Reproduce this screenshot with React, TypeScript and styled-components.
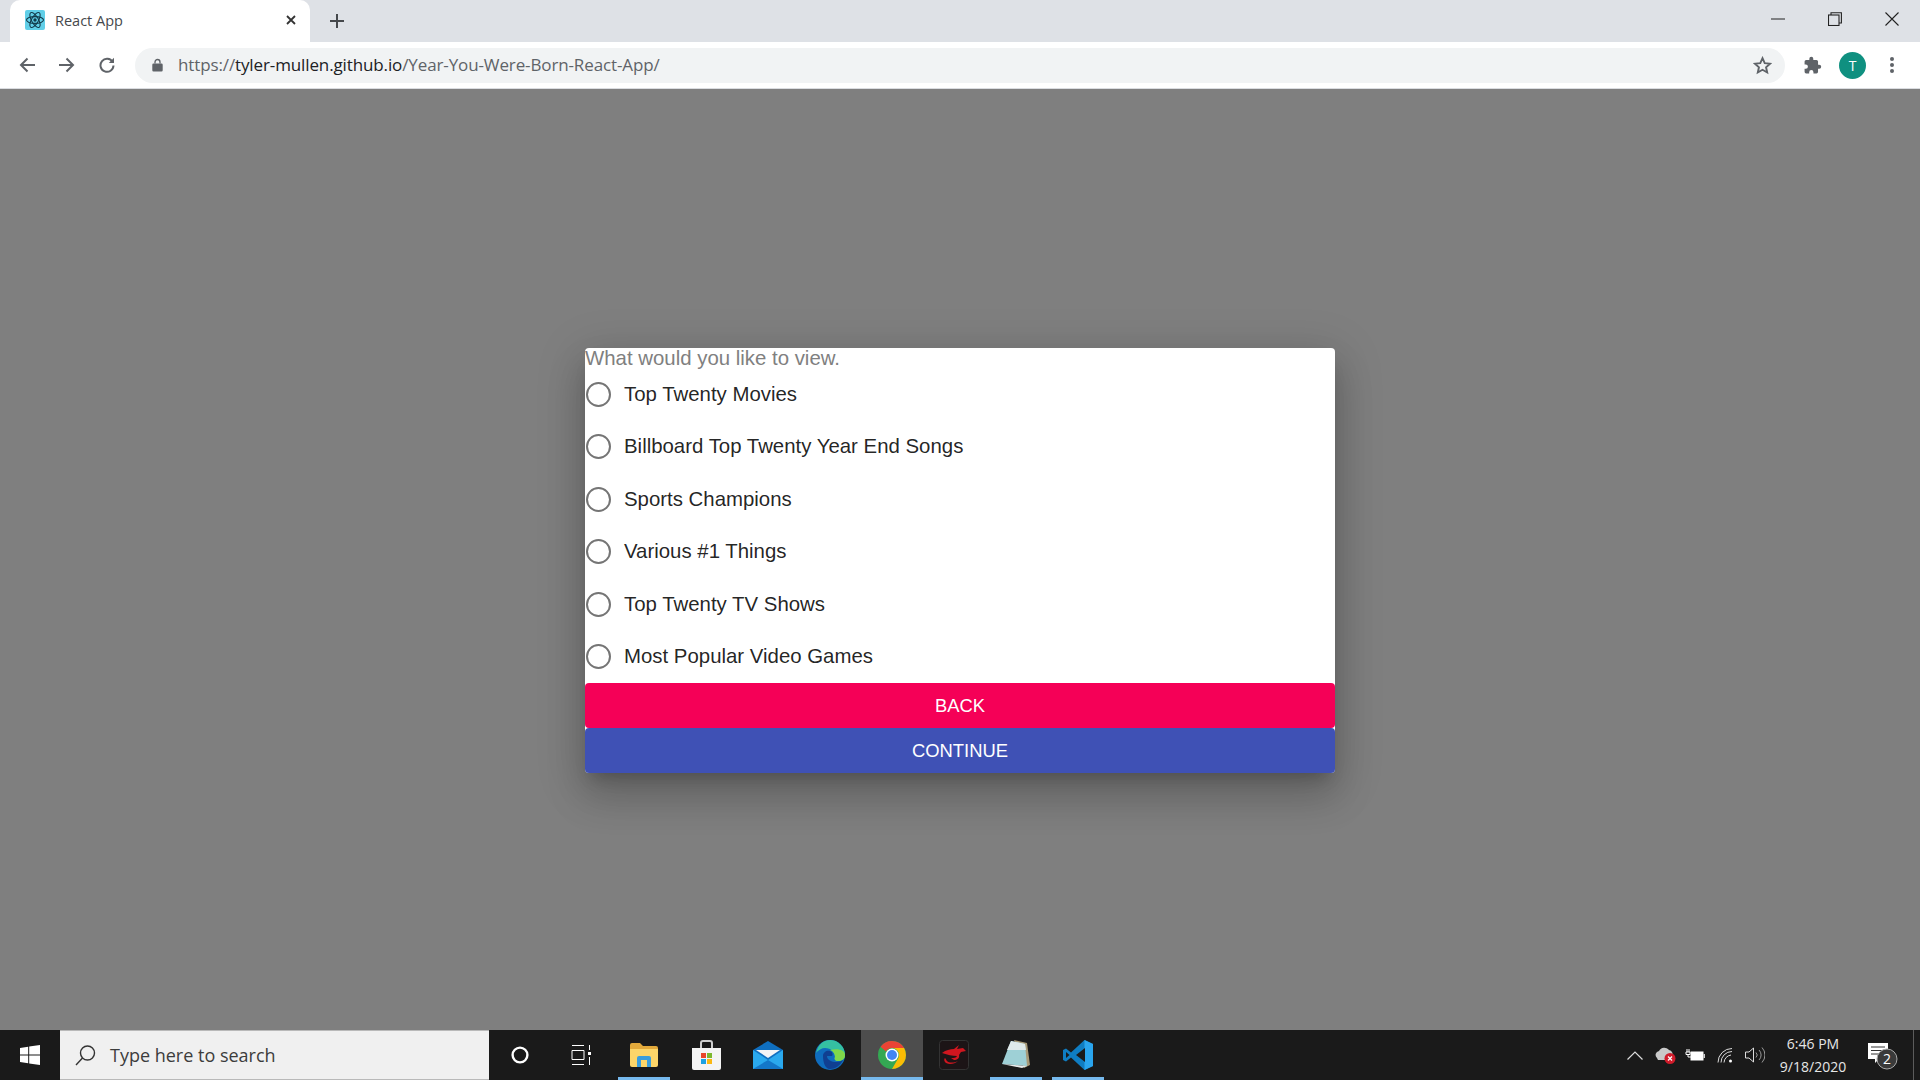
import styled, { createGlobalStyle } from "styled-components";

const GlobalStyle = createGlobalStyle`
  html, body {
    margin: 0;
    height: 100%;
    overflow: hidden;
  }
  #root {
    height: 100%;
  }
`;

const Screen = styled.div`
  height: 1080px;
  display: flex;
  flex-direction: column;
  font-family: "Open Sans", "Liberation Sans", sans-serif;
`;

const TabStrip = styled.div`
  height: 42px;
  background: #dee1e6;
  display: flex;
  padding-left: 10px;
`;
const Tab = styled.div`
  width: 300px;
  background: #fff;
  border-radius: 10px 10px 0 0;
  display: flex;
  align-items: center;
  padding: 0 13px 2px 15px;
  box-sizing: border-box;
`;
const TabTitle = styled.span`
  margin-left: 10px;
  font-size: 14.5px;
  color: #45484c;
  flex: 1;
`;
const NewTab = styled.div`
  width: 54px;
  display: flex;
  align-items: center;
  justify-content: center;
`;
const WindowControls = styled.div`
  margin-left: auto;
  display: flex;
  align-items: center;
  height: 38px;
`;
const WindowButton = styled.div`
  width: 57px;
  display: flex;
  justify-content: center;
`;

const Toolbar = styled.div`
  height: 46px;
  background: #fff;
  border-bottom: 1px solid #dadce0;
  display: flex;
  align-items: center;
`;
const NavButton = styled.div`
  width: 40px;
  display: flex;
  justify-content: center;
  &:first-child {
    margin-left: 7px;
  }
`;
const Omnibox = styled.div`
  margin-left: 8px;
  width: 1650px;
  height: 35px;
  border-radius: 18px;
  background: #f1f3f4;
  display: flex;
  align-items: center;
  padding: 0 13px 0 17px;
  box-sizing: border-box;
`;
const Url = styled.span`
  margin: 0 0 2px 15px;
  font-size: 17px;
  letter-spacing: -0.12px;
  color: #5f6368;
  flex: 1;
  b {
    font-weight: 400;
    color: #202124;
  }
`;
const ToolbarIcons = styled.div`
  display: flex;
  align-items: center;
  margin-left: 18px;
`;
const Avatar = styled.div`
  width: 27px;
  height: 27px;
  border-radius: 50%;
  background: #0f9080;
  color: #fff;
  font-size: 14px;
  display: flex;
  align-items: center;
  justify-content: center;
  margin: 0 23px 0 17px;
`;

const Stage = styled.main`
  flex: 1;
  padding-top: 2px;
  background: #7f7f7f;
  display: flex;
  align-items: center;
  justify-content: center;
`;
const Dialog = styled.div`
  width: 750px;
  height: 425px;
  background: #fff;
  border-radius: 4px;
  display: flex;
  flex-direction: column;
  font-family: "Liberation Sans", Arial, sans-serif;
  box-shadow: 0 11px 15px -7px rgba(0, 0, 0, 0.2), 0 24px 38px 3px rgba(0, 0, 0, 0.14),
    0 9px 46px 8px rgba(0, 0, 0, 0.12);
`;
const Legend = styled.div`
  height: 20px;
  font-size: 20.4px;
  line-height: 20px;
  color: #808080;
`;
const Options = styled.div`
  flex: 1;
  display: flex;
  flex-direction: column;
`;
const Option = styled.label`
  height: 52.5px;
  display: flex;
  align-items: center;
  font-size: 20.4px;
  color: rgba(0, 0, 0, 0.87);
`;
const Radio = styled.span`
  width: 21px;
  height: 21px;
  margin: 0 13px 0 1px;
  border: 2.5px solid #757575;
  border-radius: 50%;
  flex-shrink: 0;
`;
const ActionButton = styled.button<{ $bg: string }>`
  height: 45px;
  width: 100%;
  border: 0;
  padding: 0;
  border-radius: 4px;
  background: ${(p) => p.$bg};
  color: #fff;
  font-family: inherit;
  font-size: 18.4px;
  text-transform: uppercase;
`;

const Taskbar = styled.footer`
  height: 50px;
  background: #1a1a1a;
  display: flex;
  align-items: stretch;
`;
const StartButton = styled.div`
  width: 60px;
  display: flex;
  align-items: center;
  justify-content: center;
`;
const SearchBox = styled.div`
  width: 429px;
  background: #f0f0f0;
  border-top: 1px solid #b9b9b9;
  border-bottom: 1px solid #b9b9b9;
  box-sizing: border-box;
  display: flex;
  align-items: center;
  padding-left: 15px;
  font-size: 18px;
  color: #3c3c3c;
`;
const SearchLabel = styled.span`
  margin-left: 14px;
`;
const TaskItem = styled.div<{ $open?: boolean; $active?: boolean }>`
  width: 62px;
  position: relative;
  display: flex;
  align-items: center;
  justify-content: center;
  background: ${(p) => (p.$active ? "#4d4d4d" : "transparent")};
  &::after {
    content: "";
    display: ${(p) => (p.$open ? "block" : "none")};
    position: absolute;
    bottom: 0;
    left: ${(p) => (p.$active ? 0 : 5)}px;
    right: ${(p) => (p.$active ? 0 : 5)}px;
    height: 3px;
    background: #76b9ed;
  }
`;
const Tray = styled.div`
  margin-left: auto;
  display: flex;
  align-items: center;
`;
const TrayIcon = styled.div`
  width: 30px;
  display: flex;
  justify-content: center;
`;
const Clock = styled.div`
  width: 82px;
  margin-left: 2px;
  text-align: center;
  color: #e6e6e6;
  font-size: 14px;
  line-height: 23px;
`;
const Notify = styled.div`
  width: 50px;
  display: flex;
  justify-content: center;
  margin: 0 5px 0 4px;
`;
const ShowDesktop = styled.div`
  width: 6px;
  align-self: stretch;
  border-left: 1px solid #5c5c5c;
`;

const options = [
  "Top Twenty Movies",
  "Billboard Top Twenty Year End Songs",
  "Sports Champions",
  "Various #1 Things",
  "Top Twenty TV Shows",
  "Most Popular Video Games",
];

function App() {
  return (
    <Screen>
      <GlobalStyle />
      <TabStrip>
        <Tab>
          <svg width="20" height="20" viewBox="0 0 20 20">
            <rect width="20" height="20" rx="2" fill="#61cfe8" />
            <g fill="none" stroke="#123a4a" strokeWidth="1.1">
              <ellipse cx="10" cy="10" rx="8.5" ry="3.4" />
              <ellipse cx="10" cy="10" rx="8.5" ry="3.4" transform="rotate(60 10 10)" />
              <ellipse cx="10" cy="10" rx="8.5" ry="3.4" transform="rotate(120 10 10)" />
            </g>
            <circle cx="10" cy="10" r="1.7" fill="#123a4a" />
          </svg>
          <TabTitle>React App</TabTitle>
          <svg width="12" height="12" viewBox="0 0 12 12" stroke="#333" strokeWidth="1.8">
            <path d="M2 2l8 8M10 2l-8 8" />
          </svg>
        </Tab>
        <NewTab>
          <svg width="16" height="16" viewBox="0 0 16 16" stroke="#45484c" strokeWidth="2">
            <path d="M8 1v14M1 8h14" />
          </svg>
        </NewTab>
        <WindowControls>
          <WindowButton>
            <svg width="14" height="2" viewBox="0 0 14 2" stroke="#222">
              <path d="M0 1h14" />
            </svg>
          </WindowButton>
          <WindowButton>
            <svg width="14" height="14" viewBox="0 0 14 14" fill="none" stroke="#222" strokeWidth="1.1">
              <rect x="0.5" y="3" width="10.5" height="10.5" />
              <path d="M3 3V0.7h10.4V11H11" />
            </svg>
          </WindowButton>
          <WindowButton>
            <svg width="14" height="14" viewBox="0 0 14 14" stroke="#222" strokeWidth="1.1">
              <path d="M0.5 0.5l13 13M13.5 0.5l-13 13" />
            </svg>
          </WindowButton>
        </WindowControls>
      </TabStrip>

      <Toolbar>
        <NavButton>
          <svg width="16" height="16" viewBox="0 0 16 16" fill="none" stroke="#5f6368" strokeWidth="2">
            <path d="M16 8H2M8.5 1.5L2 8l6.5 6.5" />
          </svg>
        </NavButton>
        <NavButton>
          <svg width="16" height="16" viewBox="0 0 16 16" fill="none" stroke="#5f6368" strokeWidth="2">
            <path d="M0 8h14M7.5 1.5L14 8l-6.5 6.5" />
          </svg>
        </NavButton>
        <NavButton>
          <svg width="16" height="16" viewBox="0 0 16 16" fill="none" stroke="#5f6368" strokeWidth="2">
            <path d="M13.6 5A6.5 6.5 0 1 0 14.5 8.5" />
            <path d="M15 0.8V6H9.8z" fill="#5f6368" stroke="none" />
          </svg>
        </NavButton>
        <Omnibox>
          <svg width="11" height="14" viewBox="0 0 11 14" fill="#5f6368">
            <path d="M1.500 5.500h8a1.200 1.200 0 0 1 1.200 1.200v5.600a1.200 1.200 0 0 1-1.200 1.200h-8a1.200 1.200 0 0 1-1.200-1.200V6.700a1.200 1.200 0 0 1 1.200-1.200z" />
            <path d="M3 5.500V4a2.500 2.500 0 0 1 5 0v1.500" fill="none" stroke="#5f6368" strokeWidth="1.300" />
          </svg>
          <Url>
            https://<b>tyler-mullen.github.io</b>/Year-You-Were-Born-React-App/
          </Url>
          <svg width="19" height="19" viewBox="0 0 24 24" fill="none" stroke="#5f6368" strokeWidth="2.400">
            <path d="M12 2.800l2.800 6.200 6.700 0.700-5 4.500 1.400 6.600-5.900-3.400-5.900 3.400 1.400-6.600-5-4.500 6.700-0.700z" />
          </svg>
        </Omnibox>
        <ToolbarIcons>
          <svg width="19" height="19" viewBox="0 0 24 24" fill="#5f6368">
            <path d="M20.500 11H19V7a2 2 0 0 0-2-2h-4V3.500a2.500 2.500 0 0 0-5 0V5H4a2 2 0 0 0-2 2v3.800h1.500a2.700 2.700 0 0 1 0 5.400H2V20a2 2 0 0 0 2 2h3.800v-1.500a2.700 2.700 0 0 1 5.400 0V22H17a2 2 0 0 0 2-2v-4h1.500a2.500 2.500 0 0 0 0-5z" />
          </svg>
          <Avatar>T</Avatar>
          <svg width="6" height="18" viewBox="0 0 6 18" fill="#5f6368">
            <circle cx="3" cy="3" r="2" />
            <circle cx="3" cy="9" r="2" />
            <circle cx="3" cy="15" r="2" />
          </svg>
        </ToolbarIcons>
      </Toolbar>

      <Stage>
        <Dialog>
          <Legend>What would you like to view.</Legend>
          <Options>
            {options.map((o) => (
              <Option key={o}>
                <Radio />
                {o}
              </Option>
            ))}
          </Options>
          <ActionButton $bg="#f50057">Back</ActionButton>
          <ActionButton $bg="#3f51b5">Continue</ActionButton>
        </Dialog>
      </Stage>

      <Taskbar>
        <StartButton>
          <svg width="20" height="20" viewBox="0 0 20 20" fill="#fff">
            <path d="M0 2.900l8.200-1.200v7.800H0zM9.200 1.500L20 0v9.500H9.200zM0 10.500h8.200v7.800L0 17.100zM9.200 10.500H20V20L9.200 18.500z" />
          </svg>
        </StartButton>
        <SearchBox>
          <svg width="21" height="21" viewBox="0 0 21 21" fill="none" stroke="#333" strokeWidth="1.400">
            <circle cx="12.500" cy="8" r="7" />
            <path d="M7.500 13L1 20" />
          </svg>
          <SearchLabel>Type here to search</SearchLabel>
        </SearchBox>
        <TaskItem>
          <svg width="18" height="18" viewBox="0 0 18 18" fill="none" stroke="#fff" strokeWidth="2.400">
            <circle cx="9" cy="9" r="7.400" />
          </svg>
        </TaskItem>
        <TaskItem>
          <svg width="23" height="20" viewBox="0 0 23 20" fill="none" stroke="#fff" strokeWidth="1">
            <path d="M1 0.500h12M1 19.500h12M1 5.500h12v9H1zM18.500 0v5M18.500 12v8" />
            <rect x="17" y="7" width="3" height="3" fill="#fff" stroke="none" />
          </svg>
        </TaskItem>
        <TaskItem $open>
          <svg width="28" height="24" viewBox="0 0 28 24">
            <path d="M0 2a2 2 0 0 1 2-2h8l3 3h13a2 2 0 0 1 2 2v5H0z" fill="#e2a93b" />
            <path d="M0 6h28v16a2 2 0 0 1-2 2H2a2 2 0 0 1-2-2z" fill="#fcd569" />
            <path d="M7 24v-9a2 2 0 0 1 2-2h10a2 2 0 0 1 2 2v9h-4v-7h-6v7z" fill="#3a9ddc" />
          </svg>
        </TaskItem>
        <TaskItem>
          <svg width="29" height="30" viewBox="0 0 29 30">
            <path d="M9 8V3a2 2 0 0 1 2-2h7a2 2 0 0 1 2 2v5" fill="none" stroke="#cfcfcf" strokeWidth="2" />
            <path d="M0 8h29v20a2 2 0 0 1-2 2H2a2 2 0 0 1-2-2z" fill="#f4f4f4" />
            <rect x="9" y="13" width="5" height="5" fill="#e8462b" />
            <rect x="15" y="13" width="5" height="5" fill="#7cb82f" />
            <rect x="9" y="19" width="5" height="5" fill="#1da1e2" />
            <rect x="15" y="19" width="5" height="5" fill="#fbb812" />
          </svg>
        </TaskItem>
        <TaskItem>
          <svg width="30" height="28" viewBox="0 0 30 28">
            <path d="M0 9L15 0l15 9v19H0z" fill="#0f6fc0" />
            <path d="M3 9h24L15 17z" fill="#f2f4f6" />
            <path d="M0 9l15 10L30 9v19H0z" fill="#2aa9ee" />
            <path d="M0 28l15-9 15 9z" fill="#1377c9" />
          </svg>
        </TaskItem>
        <TaskItem>
          <svg width="30" height="30" viewBox="0 0 30 30">
            <circle cx="15" cy="15" r="15" fill="#0f6cbd" />
            <path d="M15 0a15 15 0 0 1 15 15c0 4-3 6-7 6-3 0-4-2-3-4 0-5-4-9-10-9-3 0-7 2-9 5C3 5 8 0 15 0z" fill="#35c0a2" />
            <path d="M30 15c0 4-3 6-7 6-3 0-4-2-3-4 0-3-2-6-5-7 8-2 15 0 15 5z" fill="#7fd84a" />
            <path d="M8 16c0-4 4-6 7-5 3 1 3 4 2 5h-5c0 4 5 6 9 6 3 0 5-1 7-2-3 6-8 9-13 9C10 29 8 22 8 16z" fill="#103f91" />
          </svg>
        </TaskItem>
        <TaskItem $open $active>
          <svg width="28" height="28" viewBox="0 0 28 28">
            <circle cx="14" cy="14" r="14" fill="#34a853" />
            <path d="M14 0a14 14 0 0 1 12.100 7H14a7 7 0 0 0-6.100 3.500L2.600 5.800A14 14 0 0 1 14 0z" fill="#ea4335" />
            <path d="M26.100 7A14 14 0 0 1 14 28l6.100-10.500A7 7 0 0 0 20 10.500 7 7 0 0 0 14 7z" fill="#fbbc05" />
            <circle cx="14" cy="14" r="6.500" fill="#fff" />
            <circle cx="14" cy="14" r="5" fill="#4285f4" />
          </svg>
        </TaskItem>
        <TaskItem>
          <svg width="30" height="30" viewBox="0 0 30 30">
            <rect x="0.500" y="0.500" width="29" height="29" rx="3" fill="#1c1416" stroke="#333" />
            <path d="M3 13c4-3 8-4 12-4l5-4-2 4 6-1 3 3-5 1-2 3c1 3-2 5-5 5l-3-2c3 0 5 0 6-2-5 0-9-1-15-3zM6 18c-2 2 0 6 5 6 3 0 6-1 8-3-4 2-9 2-11 0-1-1-1-2-2-3z" fill="#d0161f" />
          </svg>
        </TaskItem>
        <TaskItem $open>
          <svg width="28" height="30" viewBox="0 0 28 30">
            <path d="M12 0l13 3 3 22-6 3z" fill="#a89a78" />
            <path d="M9 1l14 3 2 22-25-2z" fill="#9ed0d6" />
            <path d="M9 1l14 3 1 6-19 0z" fill="#dfeaea" />
            <path d="M25 26l-5 2-20-4z" fill="#e8ecec" />
          </svg>
        </TaskItem>
        <TaskItem $open>
          <svg width="30" height="30" viewBox="0 0 30 30">
            <path d="M21.500 0L30 4v22l-8.500 4L8 17.500l-5 4-3-1.500V10l3-1.500 5 4z" fill="#0f7dc2" />
            <path d="M21.500 0L30 4v22l-8.500 4z" fill="#2aa5ee" />
            <path d="M22 8L13 15l9 7z" fill="#1a1a1a" />
            <path d="M3 12l3.500 3L3 18z" fill="#1a1a1a" />
          </svg>
        </TaskItem>
        <Tray>
          <TrayIcon>
            <svg width="16" height="9" viewBox="0 0 16 9" fill="none" stroke="#ddd" strokeWidth="1.200">
              <path d="M0.500 8.500L8 1l7.500 7.500" />
            </svg>
          </TrayIcon>
          <TrayIcon>
            <svg width="21" height="17" viewBox="0 0 21 17">
              <path d="M2 11a4 4 0 0 1 2-7 6 6 0 0 1 10-1 4 4 0 0 1 3 6l-5 4H3z" fill="#c9c9c9" />
              <circle cx="15" cy="11.500" r="5.500" fill="#d01c2b" />
              <path d="M13 9.500l4 4M17 9.500l-4 4" stroke="#fff" strokeWidth="1.200" />
            </svg>
          </TrayIcon>
          <TrayIcon>
            <svg width="20" height="13" viewBox="0 0 20 13">
              <rect x="5.500" y="2.500" width="13" height="9" fill="#fff" />
              <path d="M2 0v3M4 0v3M1 3h4v2.500H1zM3 5.500V8h3" stroke="#fff" fill="none" />
              <rect x="18.500" y="5" width="1.500" height="4" fill="#ccc" />
            </svg>
          </TrayIcon>
          <TrayIcon>
            <svg width="16" height="16" viewBox="0 0 16 16" fill="none" stroke="#ddd" strokeWidth="1">
              <path d="M1 15.500A14 14 0 0 1 15 1.500M4 15.500A11 11 0 0 1 15 4.500M7 15.500A8 8 0 0 1 14 8" />
              <circle cx="13.500" cy="14" r="1.500" fill="#fff" stroke="none" />
            </svg>
          </TrayIcon>
          <TrayIcon>
            <svg width="20" height="16" viewBox="0 0 20 16" fill="none" stroke="#ddd" strokeWidth="1">
              <path d="M0.500 5h3.500L8.500 1v14L4 11H0.500z" />
              <path d="M11 5.500a3.500 3.500 0 0 1 0 5M14 3a7 7 0 0 1 0 10M17 0.500a11 11 0 0 1 0 15" stroke="#999" />
            </svg>
          </TrayIcon>
          <Clock>
            6:46 PM
            <br />
            9/18/2020
          </Clock>
          <Notify>
            <svg width="30" height="30" viewBox="0 0 30 30">
              <path d="M0 3h20v16H11l-4 4v-4H0z" fill="#fff" />
              <path d="M3 7h14M3 10.500h14M3 14h14" stroke="#333" />
              <circle cx="19" cy="19" r="10" fill="#3a3a3a" stroke="#aaa" />
              <text x="19" y="24" fontSize="14" textAnchor="middle" fill="#fff" fontFamily="Open Sans">2</text>
            </svg>
          </Notify>
          <ShowDesktop />
        </Tray>
      </Taskbar>
    </Screen>
  );
}

export default App;
